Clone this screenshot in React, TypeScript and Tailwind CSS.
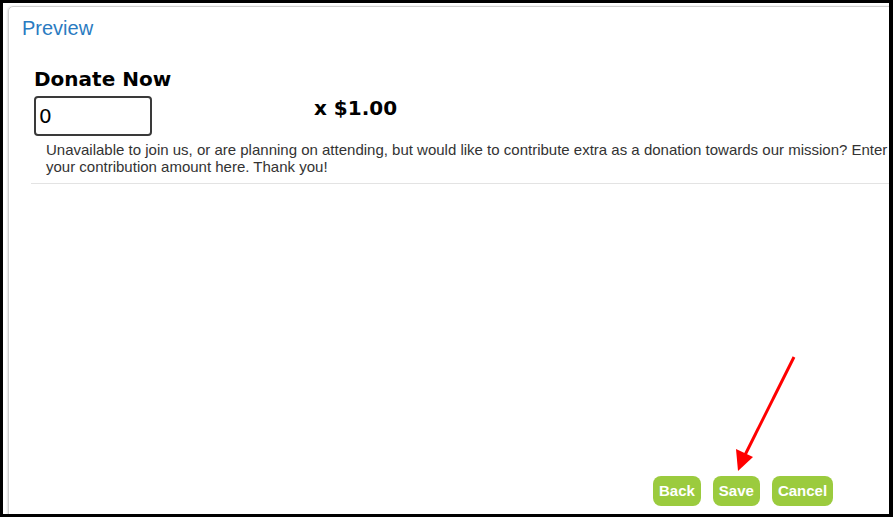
import React from "react";

export default function App() {
  return (
    <div className="w-[893px] h-[517px] bg-black pl-[3px] pt-[3px] pr-[4px] pb-[3px]">
      <div className="relative w-full h-full bg-white overflow-hidden pl-[5px] pt-[3px]">
        <div
          className="w-[920px] h-[540px] border border-[#cfcfcf] rounded-tl-[5px] flex flex-col shadow-[-1px_0_2px_rgba(0,0,0,0.12)]"
          style={{ fontFamily: "'Liberation Sans', Arial, sans-serif" }}
        >
          <div className="pl-[13px] pt-[9px] text-[20px] leading-[24px] text-[#2a7bc1]">Preview</div>
          <div className="pl-[25px] pt-[28px]">
            <div
              className="text-[20px] leading-[22px] font-bold text-black"
              style={{ fontFamily: "'DejaVu Sans', Verdana, sans-serif" }}
            >
              Donate Now
            </div>
            <div className="flex items-start mt-[6px]">
              <input
                defaultValue="0"
                className="w-[118px] h-[40px] border-2 border-[#3a3a3a] rounded-[4px] pl-[3px] text-[20px] text-black outline-none"
                style={{ fontFamily: "'DejaVu Sans', Verdana, sans-serif" }}
              />
              <div
                className="ml-[162px] mt-[1px] text-[20px] leading-[22px] font-bold text-black"
                style={{ fontFamily: "'DejaVu Sans', Verdana, sans-serif" }}
              >
                x $1.00
              </div>
            </div>
            <p className="pl-[12px] mt-[5px] w-[870px] text-[15px] leading-[17px] text-[#333333]">
              Unavailable to join us, or are planning on attending, but would like to contribute extra as a donation towards our mission? Enter your contribution amount here. Thank you!
            </p>
            <div className="mt-[8px] ml-[-3px] h-px bg-[#e3e3e3]" />
          </div>
          <div className="mt-[292px] pl-[644px] flex gap-[12px]">
            <button className="h-[30px] px-[6px] rounded-[8px] bg-[#9bcb3e] text-white font-bold text-[15px]">Back</button>
            <button className="h-[30px] px-[6px] rounded-[8px] bg-[#9bcb3e] text-white font-bold text-[15px]">Save</button>
            <button className="h-[30px] px-[6px] rounded-[8px] bg-[#9bcb3e] text-white font-bold text-[15px]">Cancel</button>
          </div>
        </div>
        <svg className="absolute left-0 top-0" width="886" height="511" viewBox="0 0 886 511">
          <line x1="791" y1="354" x2="742" y2="452" stroke="#ff0000" strokeWidth="3" />
          <polygon points="735,468 733,446 750,454" fill="#ff0000" />
        </svg>
      </div>
    </div>
  );
}
